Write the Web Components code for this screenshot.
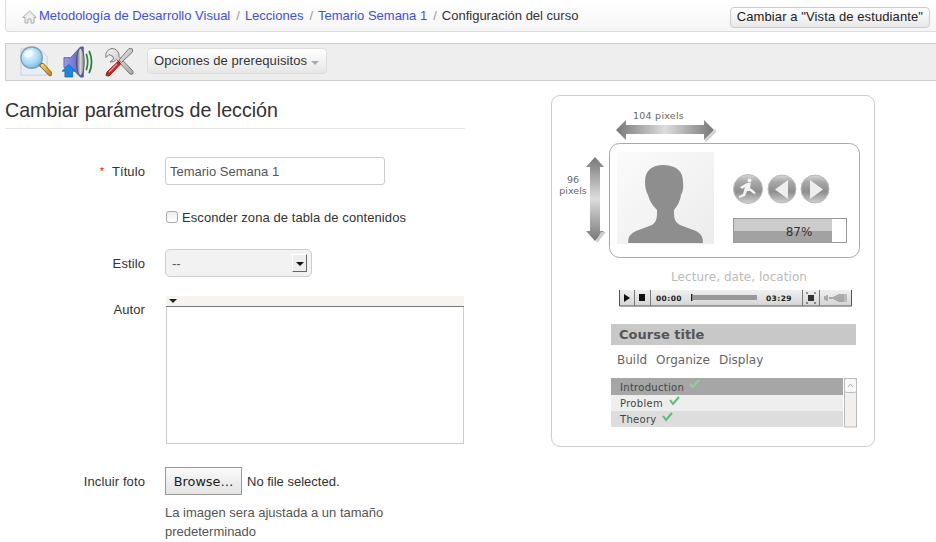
<!DOCTYPE html>
<html lang="es">
<head>
<meta charset="utf-8">
<title>Configuración del curso</title>
<style>
html,body{margin:0;padding:0;background:#fff;overflow:hidden}
body{font:13px/19px "Liberation Sans",Arial,sans-serif;color:#333;width:936px;height:542px}
</style>
</head>
<body>
<crumb-bar>
  <a href="#">Metodología de Desarrollo Visual</a>
  <a href="#">Lecciones</a>
  <a href="#">Temario Semana 1</a>
  <span>Configuración del curso</span>
  <plain-btn slot="action">Cambiar a "Vista de estudiante"</plain-btn>
</crumb-bar>

<tool-bar>
  <svg width="32" height="32" viewBox="0 0 33 33">
    <defs>
      <radialGradient id="lens" cx=".4" cy=".35" r=".7"><stop offset="0" stop-color="#eefaff"/><stop offset=".6" stop-color="#a9dcf4"/><stop offset="1" stop-color="#6fb4dd"/></radialGradient>
      <linearGradient id="hnd" x1="0" y1="0" x2="1" y2="1"><stop offset="0" stop-color="#f8d070"/><stop offset="1" stop-color="#c98a20"/></linearGradient>
    </defs>
    <path d="M1 3H20L28 11V30H1Z" fill="#e8eef8" stroke="#c3cfe2"/>
    <circle cx="12" cy="12" r="11" fill="url(#lens)" stroke="#7f9fb8" stroke-width="1.4"/>
    <ellipse cx="9" cy="8" rx="5" ry="3.4" fill="#fff" opacity=".75" transform="rotate(-25 9 8)"/>
    <path d="M20 21L23 18" stroke="#888" stroke-width="3"/>
    <path d="M23 20L31 28.5" stroke="#8a6418" stroke-width="5" stroke-linecap="round"/>
    <path d="M23 20L31 28.5" stroke="url(#hnd)" stroke-width="3.4" stroke-linecap="round"/>
  </svg>
  <svg width="32" height="32" viewBox="0 0 33 33">
    <defs>
      <linearGradient id="spk" x1="0" y1="0" x2="1" y2="0"><stop offset="0" stop-color="#9a9cf0"/><stop offset="1" stop-color="#5557b8"/></linearGradient>
      <linearGradient id="cone" x1="0" y1="0" x2="1" y2="0"><stop offset="0" stop-color="#5c5c70"/><stop offset=".5" stop-color="#d8d8d8"/><stop offset="1" stop-color="#77778a"/></linearGradient>
    </defs>
    <path d="M2 12H9L19 1H22V32H19L9 22H2Z" fill="url(#spk)" stroke="#4a4ca0" stroke-width=".8"/>
    <ellipse cx="19" cy="16.5" rx="4" ry="14" fill="url(#cone)" stroke="#444" stroke-width=".7"/>
    <path d="M25 8Q28 16.500 25 25" fill="none" stroke="#1f8a3a" stroke-width="1.8"/>
    <path d="M28 5Q33 16.500 28 28" fill="none" stroke="#2a7a40" stroke-width="1.8"/>
    <path d="M7 19L14 26H11V32H3V26H0Z" fill="#1f86e0" stroke="#0d5aa8" stroke-width=".7"/>
  </svg>
  <svg width="30" height="30" viewBox="0 0 30 30">
    <defs>
      <linearGradient id="met" x1="0" y1="0" x2="1" y2="1"><stop offset="0" stop-color="#f4f4f4"/><stop offset="1" stop-color="#a8a8a8"/></linearGradient>
    </defs>
    <path d="M8 1.500A7 7 0 0 0 2 10.500L5 7.500L9 9.500L9.500 12L6 15A7 7 0 0 0 12.500 12.500L26 27Q28.500 28.500 29 26Q29.500 24.500 28 23L15 9.500A7 7 0 0 0 8 1.500Z" fill="url(#met)" stroke="#6e6e6e" stroke-width=".9"/>
    <path d="M28.500 2L25 1.500L15 13L17.500 15.500L28.500 5Z" fill="url(#met)" stroke="#6e6e6e" stroke-width=".9"/>
    <path d="M14.500 14L3 25L2 28.500L5 29L16.500 17Z" fill="#d42222" stroke="#8a1010" stroke-width=".9"/>
    <path d="M13 17L5 25" stroke="#f59a9a" stroke-width="1.300"/>
  </svg>
  <menu-btn>Opciones de prerequisitos</menu-btn>
</tool-bar>

<main-layout>
  <lesson-form slot="form">
    <form-row req label="Título"><field-box>Temario Semana 1</field-box></form-row>
    <form-row gap="22"><check-line>Esconder zona de tabla de contenidos</check-line></form-row>
    <form-row gap="22" label="Estilo"><select-box>--</select-box></form-row>
    <form-row gap="19" label="Autor" style="--lab:26px"><rich-box></rich-box></form-row>
    <form-row gap="23" label="Incluir foto"><file-pick></file-pick></form-row>
    <form-row gap="8"><help-text>La imagen sera ajustada a un tamaño predeterminado</help-text></form-row>
  </lesson-form>
  <lesson-preview slot="preview"></lesson-preview>
</main-layout>

<script>
let def= (name,html,extra={})=>{
  let t= document.createElement("template");
  t.innerHTML= html;
  customElements.define(name, class extends HTMLElement{
    constructor(){
      super();
      this.attachShadow({mode:"open"}).append(t.content.cloneNode(true));
    }
    connectedCallback(){ if(extra.init) extra.init(this); }
  });
};

//-------------------------------------------- top bars
def("crumb-bar",`<style>
:host{display:flex;align-items:center;height:31px;margin-left:5px;padding-left:16px;border:1px solid #ddd;border-width:0 0 1px 1px;
border-radius:0 0 0 4px;background:linear-gradient(#fff,#f5f5f5);box-sizing:content-box}
svg{flex:none;margin-right:2px;margin-top:2px}
.trail{display:flex;align-items:center;flex:1;margin-top:-1px}
::slotted(a){color:#3f4fe8;text-decoration:none}
::slotted(a)::after{content:"/";color:#999;margin:0 5px 0 6px}
.act{margin-right:6px;margin-top:4px}
</style>
<svg width="15" height="14" viewBox="0 0 15 14"><path d="M7.500 1L.8 7.500H3V13H6V9H9V13H12V7.500H14.200Z" fill="#eee" stroke="#aaa"/></svg>
<div class="trail"><slot></slot></div>
<div class="act"><slot name="action"></slot></div>`);

def("plain-btn",`<style>
:host{display:block;padding:0 6px;height:19px;line-height:18px;border:1px solid #ccc;border-radius:4px;color:#222;
background:linear-gradient(#fff,#e8e8e8);box-sizing:content-box;white-space:nowrap;letter-spacing:.1px}
</style><slot></slot>`);

def("tool-bar",`<style>
:host{display:flex;align-items:center;gap:10px;height:36px;margin:11px 0 0 5px;padding-left:14px;background:#eee;
border:1px solid #ccc;border-width:1px 0 1px 1px}
::slotted(svg){flex:none}
</style><slot></slot>`);

def("menu-btn",`<style>
:host{display:flex;align-items:center;box-sizing:border-box;height:26px;margin:-3px 0 0 3px;padding:0 8px 0 6px;width:180px;border:1px solid #ddd;border-radius:4px;
background:linear-gradient(#fff,#e6e6e6);color:#333;white-space:nowrap;letter-spacing:.08px}
i{width:0;height:0;margin:5px 0 0 4px;border:4px solid transparent;border-top-color:#aaa;border-bottom:0}
</style><slot></slot><i></i>`);

//-------------------------------------------- main
def("main-layout",`<style>
:host{display:grid;grid-template-columns:460px 324px;column-gap:86px;margin-left:5px}
h1{margin:0;padding:18px 0 6px;font:19.65px/23px "Liberation Sans",Arial,sans-serif;color:#333;border-bottom:1px solid #e5e5e5}
.pv{padding-top:14px}
</style>
<div><h1>Cambiar parámetros de lección</h1><slot name="form"></slot></div>
<div class="pv"><slot name="preview"></slot></div>`);

def("lesson-form",`<style>:host{display:block;padding-top:28px}</style><slot></slot>`);

def("form-row",`<style>
:host{display:grid;grid-template-columns:140px 1fr;column-gap:20px;align-items:start}
.l{display:flex;justify-content:flex-end;align-items:center;height:var(--lab,28px);white-space:nowrap;letter-spacing:.1px}
:host(:not([label])) .l{height:0}
.r{color:#e00;font-size:10px;margin-right:8px;display:none}
:host([req]) .r{display:inline}
</style><div class="l"><span class="r">*</span><span class="t"></span></div><div><slot></slot></div>`,{
  init(el){
    el.shadowRoot.querySelector(".t").textContent= el.getAttribute("label")||"";
    el.style.marginTop= (el.getAttribute("gap")||0)+"px";
  }
});

def("field-box",`<style>
:host{display:block;width:220px;height:28px;line-height:27px;padding-left:4px;box-sizing:border-box;border:1px solid #ccc;border-radius:3px;background:#fff;color:#555}
</style><slot></slot>`);

def("check-line",`<style>
:host{display:flex;align-items:center;height:20px;padding-left:1px;letter-spacing:.08px}
i{width:10px;height:10px;margin-right:4px;border:1px solid #aaa;border-radius:3px;background:linear-gradient(#eee,#fff)}
</style><i></i><slot></slot>`);

def("select-box",`<style>
:host{display:flex;align-items:center;justify-content:space-between;width:147px;height:28px;box-sizing:border-box;padding:0 4px 0 6px;border:1px solid #ccc;border-radius:5px;background:#f2f2f2;color:#555}
b{display:flex;align-items:center;justify-content:center;width:15px;height:18px;box-sizing:border-box;background:#eee;border:1px solid;border-color:#fff #666 #666 #fff}
b::after{content:"";border:4px solid transparent;border-top-color:#111;border-bottom:0;margin-top:2px}
</style><slot></slot><b></b>`);

def("rich-box",`<style>
:host{display:block;width:298px;height:148px;margin-left:1px;box-sizing:border-box;border:1px solid #ccc;border-top:0;background:#fff}
.bar{height:10px;background:#f5f4ef;border-bottom:1px solid #777;margin:0 -1px 0 -1px;display:flex;align-items:center;padding-left:3px}
.bar::after{content:"";border:4px solid transparent;border-top-color:#222;border-bottom:0;margin-left:0}
</style><div class="bar"></div>`);

def("file-pick",`<style>
:host{display:flex;align-items:center;height:28px;gap:5px}
b{font:normal 12.8px "DejaVu Sans",sans-serif;display:flex;align-items:center;justify-content:center;width:77px;height:28px;box-sizing:border-box;border:1px solid #999;background:linear-gradient(#fafafa,#e4e4e4);color:#222}
</style><b>Browse…</b><span>No file selected.</span>`);

def("help-text",`<style>:host{display:block;width:235px;color:#555}</style><slot></slot>`);

//-------------------------------------------- lesson preview picture, coordinates are the page's less (551,95)
def("lesson-preview",`<style>
:host{display:block;width:324px;height:352px;box-sizing:border-box;border:1px solid #ccc;border-radius:9px;background:#fff}
svg{display:block;margin:-1px}
text{font-family:"DejaVu Sans",sans-serif}
</style>
<svg width="324" height="352" viewBox="551 95 324 352">
<defs>
  <linearGradient id="ah" x1="0" x2="1" y1="0" y2="0"><stop offset="0" stop-color="#777"/><stop offset=".5" stop-color="#ddd"/><stop offset="1" stop-color="#777"/></linearGradient>
  <linearGradient id="av" x1="0" x2="0" y1="0" y2="1"><stop offset="0" stop-color="#777"/><stop offset=".5" stop-color="#ddd"/><stop offset="1" stop-color="#777"/></linearGradient>
  <linearGradient id="ph" x1="0" x2="1" y1="0" y2="1"><stop offset="0" stop-color="#fbfbfb"/><stop offset="1" stop-color="#ececec"/></linearGradient>
  <linearGradient id="bt" x1="0" x2="0" y1="0" y2="1"><stop offset="0" stop-color="#d8d8d8"/><stop offset=".25" stop-color="#a8a8a8"/><stop offset=".6" stop-color="#8e8e8e"/><stop offset="1" stop-color="#d0d0d0"/></linearGradient>
  <linearGradient id="pl" x1="0" x2="0" y1="0" y2="1"><stop offset="0" stop-color="#f0f0f0"/><stop offset="1" stop-color="#d4d4d4"/></linearGradient>
</defs>

<text x="658.500" y="119" font-size="9.500" fill="#666" text-anchor="middle" letter-spacing=".25">104 pixels</text>
<path d="M616 130L626 120V125H704V120L714 130L704 140V134H626V140Z" fill="url(#ah)"/>
<path d="M705 140L716 129V132L706 142Z" fill="#ccc"/>
<text x="573" y="182.500" font-size="9.500" fill="#666" text-anchor="middle">96</text>
<text x="573" y="193.500" font-size="9.500" fill="#666" text-anchor="middle">pixels</text>
<path d="M595 157L604 167H600V231H604L595 241L586 231H590V167H586Z" fill="url(#av)"/>
<path d="M601 232H606L597 243L596 241Z" fill="#ccc"/>

<rect x="609.500" y="143.500" width="250" height="114" rx="10" fill="#fff" stroke="#aaa"/>
<rect x="617" y="152" width="97" height="92" fill="url(#ph)"/>
<path d="M628 243Q628 234 636 231L652 225Q657 222 657 214V210Q650 203 648 195Q645 190 645 182Q645 165 664 165Q683 166 683 182Q684 190 681 195Q680 203 674 210V214Q674 222 680 225L696 231Q703 234 703 243Z" fill="#8e8e8e"/>

<circle cx="748" cy="189" r="14.500" fill="url(#bt)" stroke="#bbb"/>
<path d="M749.500 178.500a2 2 0 1 1 0 4a2 2 0 1 1 0-4ZM747 183L751 183L750 188L753 190L756 193L754 194L750 191L747 191L745 196L739 198L739 196L743 194L745 187L742 189L740 187Z" fill="#f4f4f4"/>
<circle cx="782" cy="189" r="14" fill="url(#bt)" stroke="#bbb"/>
<path d="M775 189.500L788 180V199Z" fill="#eee"/>
<circle cx="815" cy="189" r="14" fill="url(#bt)" stroke="#bbb"/>
<path d="M823 189.500L810 180V199Z" fill="#eee"/>

<rect x="733.500" y="218.500" width="113" height="24" fill="#fff" stroke="#999"/>
<rect x="734" y="218" width="113" height="1" fill="#999"/>
<rect x="734" y="219" width="98" height="12" fill="#ccc"/>
<rect x="734" y="231" width="98" height="11.500" fill="#a2a2a2"/>
<text x="799" y="236" font-size="12" fill="#333" text-anchor="middle">87%</text>

<text x="739" y="281" font-size="12" fill="#bbb" text-anchor="middle" letter-spacing=".05">Lecture, date, location</text>

<rect x="619" y="290" width="233" height="16" fill="url(#pl)"/>
<path d="M619.500 290V306H851.500V290" fill="none" stroke="#555"/>
<path d="M634.500 290V306M650.500 290V306M802.500 290V306M819.500 290V306" stroke="#777"/>
<path d="M624 294L630 298L624 302Z" fill="#111"/>
<rect x="639" y="294" width="6" height="7" fill="#111"/>
<text x="656" y="301" font-size="7.500" font-weight="bold" fill="#222" letter-spacing=".4">00:00</text>
<rect x="691" y="294" width="1.500" height="7" fill="#222"/>
<rect x="693" y="295" width="64" height="5" fill="#999"/>
<text x="766" y="301" font-size="7.500" font-weight="bold" fill="#222" letter-spacing=".4">03:29</text>
<rect x="808" y="295" width="6" height="6" fill="#333"/>
<path d="M806 293H808M814 293H816M806 303H808M814 303H816" stroke="#333"/>
<path d="M825 296V300M827 295V301M829 298H834M835 296V300M837 295V301M839 294V302M841 294V302M843 294V302" stroke="#555" stroke-width=".8"/>
<rect x="844" y="294" width="3" height="8" fill="#bbb"/>

<rect x="611" y="324" width="245" height="21" fill="#c8c8c8"/>
<text x="619" y="339" font-size="13" font-weight="bold" fill="#555">Course title</text>

<text x="617" y="364" font-size="12" fill="#666">Build</text>
<text x="656" y="364" font-size="12" fill="#666">Organize</text>
<text x="719" y="364" font-size="12" fill="#666">Display</text>

<rect x="611" y="378" width="232" height="17" fill="#a6a6a6"/>
<rect x="611" y="395" width="232" height="16" fill="#eee"/>
<rect x="611" y="411" width="232" height="16" fill="#ddd"/>
<text x="620" y="390.500" font-size="10" fill="#444" letter-spacing=".3">Introduction</text>
<text x="620" y="406.500" font-size="10" fill="#444" letter-spacing=".3">Problem</text>
<text x="620" y="422.500" font-size="10" fill="#444" letter-spacing=".3">Theory</text>
<path d="M690 384L693 387L699 380" fill="none" stroke="#8fd09c" stroke-width="2"/>
<path d="M670 400L673 404L679 397" fill="none" stroke="#55c070" stroke-width="2"/>
<path d="M663 416L666 420L672 413" fill="none" stroke="#55c070" stroke-width="2"/>

<rect x="844.500" y="378.500" width="12" height="48.500" fill="#f3efec" stroke="#bbb"/>
<rect x="844.500" y="378.500" width="12" height="14" rx="2" fill="#f8f8f8" stroke="#bbb"/>
<path d="M848 387L850.500 384L853 387" fill="none" stroke="#aaa"/>
</svg>`);
</script>
</body>
</html>
